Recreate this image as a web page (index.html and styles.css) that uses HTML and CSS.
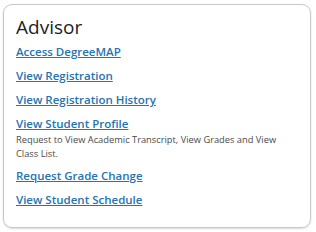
FILE: index.html
```html
<!DOCTYPE html>
<html lang="en">
<head>
  <meta charset="UTF-8" />
  <meta name="viewport" content="width=device-width, initial-scale=1.0" />
  <title>Advisor</title>
  <link rel="stylesheet" href="styles.css">
</head>
<body>
  <div class="card">
    <h2>Advisor</h2>
    <ul class="links">
      <li><a href="#">Access DegreeMAP</a></li>
      <li><a href="#">View Registration</a></li>
      <li><a href="#">View Registration History</a></li>
      <li>
        <a href="#">View Student Profile</a>
        <p class="desc">Request to View Academic Transcript, View Grades and View Class List.</p>
      </li>
      <li><a href="#">Request Grade Change</a></li>
      <li><a href="#">View Student Schedule</a></li>
    </ul>
  </div>
</body>
</html>
```

FILE: styles.css
```css
* {
  box-sizing: border-box;
}

body {
  margin: 0;
  padding: 4px 5px 4px 3px;
  font-family: "Open Sans", "Noto Sans", Arial, sans-serif;
  color: #222;
  background: #fff;
}

.card {
  height: 224px;
  border: 1px solid #c8c8c8;
  border-radius: 9px;
  box-shadow: 0 1px 2px rgba(0, 0, 0, 0.15);
  padding: 8px 12px;
}

h2 {
  margin: 0 0 3px;
  font-size: 19px;
  font-weight: 400;
  line-height: 28px;
  color: #222;
}

.links {
  list-style: none;
  margin: 0;
  padding: 0;
}

.links li {
  margin-bottom: 8px;
  font-size: 11.5px;
  line-height: 16px;
}

.links a {
  font-weight: 600;
  color: #2474b0;
  text-decoration: underline;
}

.desc {
  margin: 1px 0 -1px;
  font-size: 9.3px;
  line-height: 14px;
  color: #4a4a4a;
}
```
